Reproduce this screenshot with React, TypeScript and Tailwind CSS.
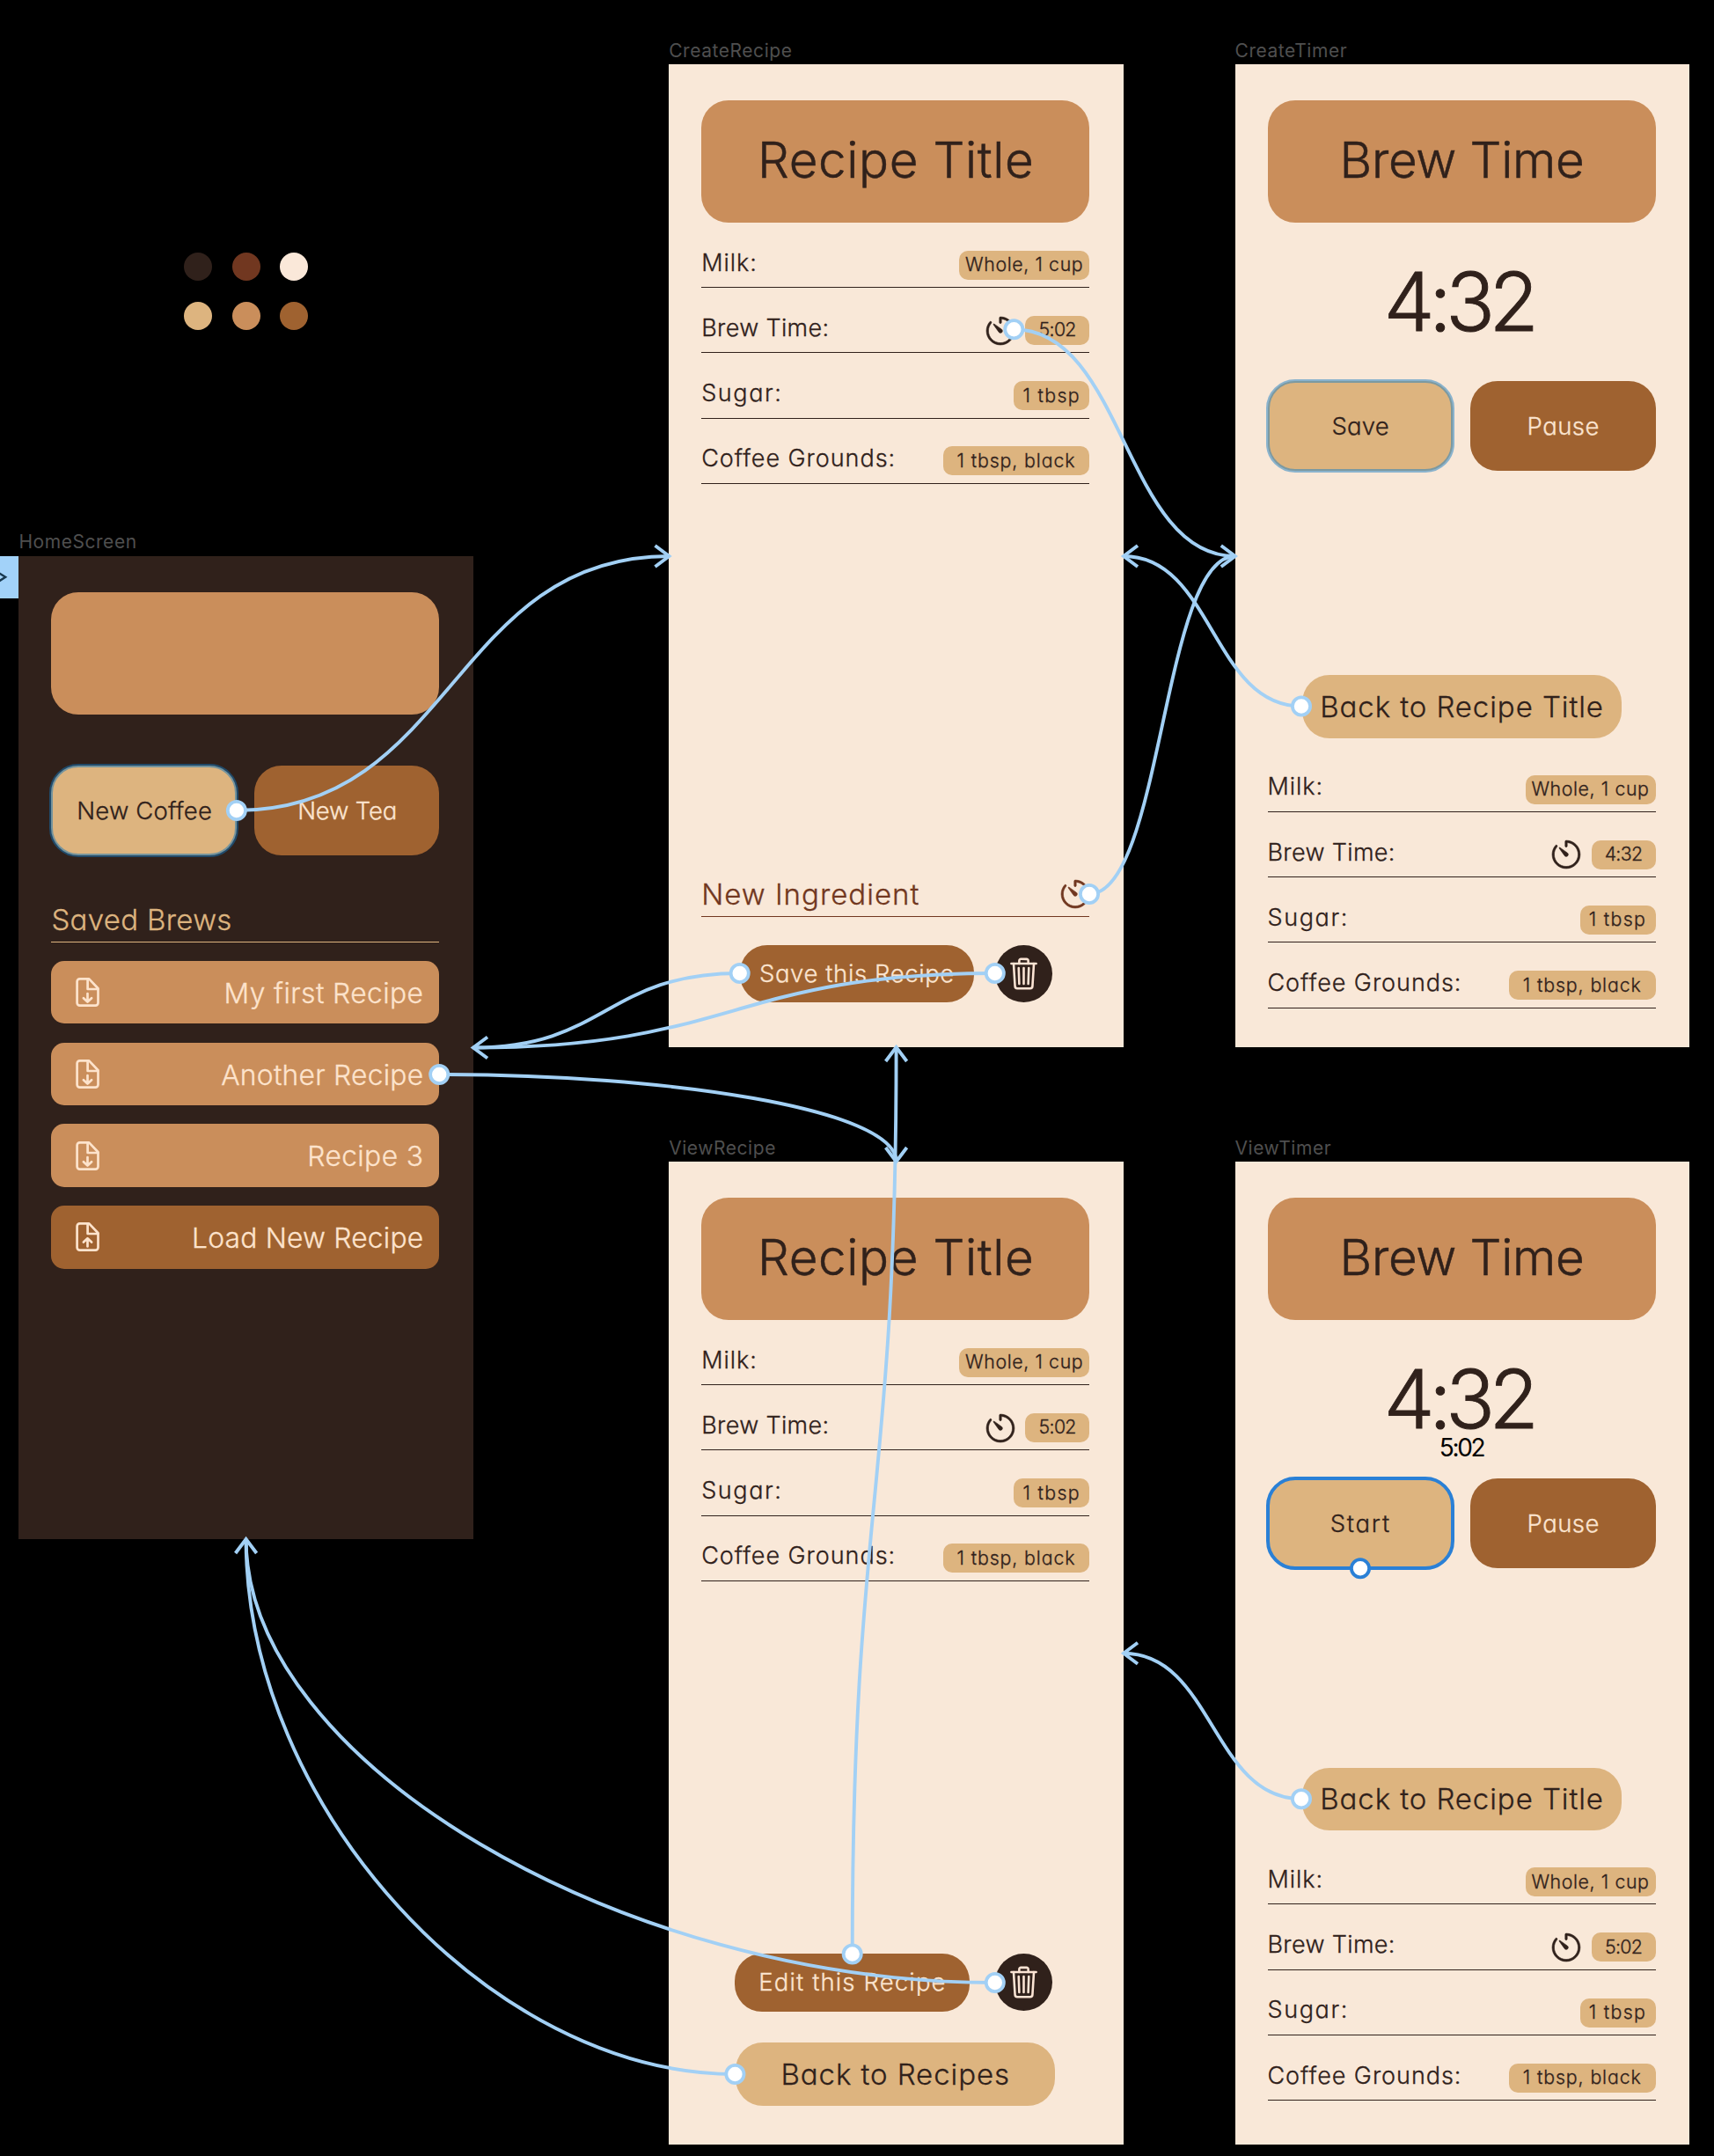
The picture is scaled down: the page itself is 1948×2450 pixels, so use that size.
import type { ReactNode } from "react";
import { RxTimer } from "react-icons/rx";
import { IoTrashOutline } from "react-icons/io5";

const swatches = ["bg-[#30211b]", "bg-[#713720]", "bg-[#fae8d9]", "bg-[#ddb47f]", "bg-[#ca8e5b]", "bg-[#9f6230]"];

type Ingredient = { label: string; tracking: string; value: string; chip: string; timer?: boolean };

const milk: Ingredient = { label: "Milk:", tracking: "tracking-[0.95px]", value: "Whole, 1 cup", chip: "w-[148px] tracking-[0.62px]" };
const sugar: Ingredient = { label: "Sugar:", tracking: "tracking-[1.6px]", value: "1 tbsp", chip: "w-[86px] tracking-[1.37px]" };
const grounds: Ingredient = { label: "Coffee Grounds:", tracking: "tracking-[0.95px]", value: "1 tbsp, black", chip: "w-[166.5px] tracking-[0.9px]" };

const ingredients = (time: string): Ingredient[] => [
  milk,
  { label: "Brew Time:", tracking: "tracking-[0.34px]", value: time, chip: "w-[73px] tracking-[-0.68px]", timer: true },
  sugar,
  grounds,
];

function Frame({ name, place, dark, children }: { name: string; place: string; dark?: boolean; children: ReactNode }) {
  return (
    <section className={`absolute w-[516.5px] ${place}`}>
      <div className="absolute -top-[26.5px] left-0 text-[21px] leading-none font-normal tracking-[0.55px] whitespace-nowrap text-[#4f4f4f] [-webkit-text-stroke:0px] [font-feature-settings:normal]">{name}</div>
      <div className={`flex h-[1117px] flex-col px-[37px] pt-[41px] ${dark ? "bg-[#30211b]" : "bg-[#f9e8d8]"}`}>{children}</div>
    </section>
  );
}

function TitleCard({ children, tracking = "" }: { children?: ReactNode; tracking?: string }) {
  return (
    <div className={`flex h-[139px] w-[441px] shrink-0 items-center justify-center rounded-[31px] bg-[#ca8e5b] pb-[2px] pl-[1px] text-[56.5px] leading-none text-[#30211b] [-webkit-text-stroke:0.5px] ${tracking}`}>
      {children}
    </div>
  );
}

function ActionPair({ first, firstClass, second, secondClass }: { first: string; firstClass: string; second: string; secondClass: string }) {
  const base = "flex h-[102px] w-[210.5px] items-center justify-center rounded-[31px] pt-[2px] pl-[1px] text-[27.5px] leading-none";
  return (
    <div className="flex w-[441px] shrink-0 justify-between">
      <div className={`${base} bg-[#ddb47f] text-[#30211b] outline-solid outline-offset-[-2px] ${firstClass}`}>{first}</div>
      <div className={`${base} bg-[#9f6230] text-[#fbe4cf] ${secondClass}`}>{second}</div>
    </div>
  );
}

function TimerIcon({ className = "" }: { className?: string }) {
  return <RxTimer className={`size-[36px] stroke-current [stroke-width:0.25] ${className}`} />;
}

function Ingredients({ time }: { time: string }) {
  return (
    <div className="w-[441px] shrink-0">
      {ingredients(time).map((item) => (
        <div key={item.label} className="flex h-[74.2px] items-end border-b border-[#30211b]">
          <span className={`pb-[14.5px] text-[27px] leading-none text-[#30211b] ${item.tracking}`}>{item.label}</span>
          <div className="ml-auto flex items-center gap-[10.5px] pb-[8.3px]">
            {item.timer && <TimerIcon className="-my-[2px] text-[#30211b]" />}
            <span className={`flex h-[33px] items-center justify-center rounded-[10px] bg-[#ddb47f] pb-[1px] text-[21.3px] leading-none text-[#30211b] ${item.chip}`}>
              {item.value}
            </span>
          </div>
        </div>
      ))}
    </div>
  );
}

function FileIcon({ up }: { up?: boolean }) {
  return (
    <svg viewBox="0 0 27 33" className="h-[33px] w-[27px]" fill="none" stroke="#fde3cc" strokeWidth="2.7" strokeLinecap="round" strokeLinejoin="round">
      <path d="M4.6 1.4H15.2L25.5 12.2V28.6a3 3 0 0 1-3 3H4.6a3 3 0 0 1-3-3V4.4a3 3 0 0 1 3-3Z" />
      <path d="M13.6 1.8V13H25.2" />
      {up ? <path d="M13.5 27.4V18.4M8.9 22.6L13.5 18.2L18.1 22.6" /> : <path d="M13.5 18V27.2M8.9 23.2L13.5 27.6L18.1 23.2" />}
    </svg>
  );
}

function SavedBrew({ name, tracking, upload }: { name: string; tracking: string; upload?: boolean }) {
  return (
    <div className={`flex h-[71.5px] items-center justify-between rounded-[15px] pr-[18px] pl-[27.5px] ${upload ? "bg-[#9f6230]" : "bg-[#ca8e5b]"}`}>
      <FileIcon up={upload} />
      <span className={`pt-[2px] text-[31.8px] leading-none text-[#fde3cc] [font-feature-settings:normal] ${tracking}`}>{name}</span>
    </div>
  );
}

function TrashButton() {
  return (
    <div className="flex size-[65px] items-center justify-center rounded-full bg-[#30211b]">
      <IoTrashOutline className="size-[41px] text-[#fbe4d4]" />
    </div>
  );
}

function Clock({ small }: { small?: string }) {
  return (
    <div className="flex h-[180px] w-[441px] shrink-0 flex-col items-center pt-[51.5px]">
      <div className="pr-[7px] text-[92px] leading-[76px] tracking-[-6.6px] text-[#30211b] [-webkit-text-stroke:0.9px]">4:32</div>
      {small && <div className="mt-[3.5px] text-[28px] leading-none font-normal tracking-[-2.3px] text-black [-webkit-text-stroke:0px]">{small}</div>}
    </div>
  );
}

function WideButton({ children, place }: { children: ReactNode; place: string }) {
  return (
    <div className={`flex h-[71.5px] w-[363px] shrink-0 items-center justify-center rounded-[31px] bg-[#ddb47f] pt-[1px] text-[33px] leading-none tracking-[0.92px] whitespace-nowrap text-[#30211b] ${place}`}>
      {children}
    </div>
  );
}

type Link = { d: string; dot: [number, number] };

const links: Link[] = [
  { d: "M268.7 921C514.5 921 514.5 632 760.5 632", dot: [268.9, 921] },
  { d: "M1152.3 374.3C1278 374.3 1278 632 1403.8 632", dot: [1152.3, 374.3] },
  { d: "M1238 1016C1321 1016 1321 632 1403.8 632", dot: [1238, 1016] },
  { d: "M1479 802.5C1378 802.5 1378 632 1277 632", dot: [1479, 802.5] },
  { d: "M840.7 1106C689 1106 689 1190.5 537.8 1190.5", dot: [840.7, 1106] },
  { d: "M1130.8 1106C834.2 1106 834.2 1190.5 537.8 1190.5", dot: [1130.8, 1106] },
  { d: "M499.2 1221C759 1221 1018.6 1260 1018.6 1320", dot: [499.2, 1221] },
  { d: "M968.7 2220.5C968.7 1705 1018.6 1705 1018.6 1190", dot: [968.7, 2220.5] },
  { d: "M1130.8 2253C705.2 2253 279.6 2001 279.6 1749", dot: [1130.8, 2253] },
  { d: "M835.4 2357C557.5 2357 279.6 2053 279.6 1749", dot: [835.4, 2357] },
  { d: "M1479 2044.2C1378 2044.2 1378 1878.8 1277 1878.8", dot: [1479, 2044.2] },
];

const arrowHeads = [
  "M744.5 620L760.5 632L744.5 644",
  "M1387.8 620L1403.8 632L1387.8 644",
  "M1293 620L1277 632L1293 644",
  "M554 1178.5L537.8 1190.5L554 1202.5",
  "M1006.6 1304L1018.6 1320L1030.6 1304",
  "M1006.6 1206L1018.6 1190L1030.6 1206",
  "M267.6 1765L279.6 1749L291.6 1765",
  "M1293 1866.8L1277 1878.8L1293 1890.8",
];

function Connectors() {
  return (
    <svg className="pointer-events-none absolute inset-0" width="1948" height="2450" viewBox="0 0 1948 2450" fill="none">
      <g stroke="#a2d0f5" strokeWidth="3.9">
        {links.map((link) => (
          <path key={link.d} d={link.d} />
        ))}
        {arrowHeads.map((d) => (
          <path key={d} d={d} />
        ))}
      </g>
      {links.map(({ dot }) => (
        <circle key={dot.join()} cx={dot[0]} cy={dot[1]} r="10.1" fill="#fff" stroke="#a2d0f5" strokeWidth="3.8" />
      ))}
      <circle cx="1546" cy="1782.2" r="10.1" fill="#fff" stroke="#2a80d6" strokeWidth="3.8" />
    </svg>
  );
}

export default function App() {
  return (
    <div className="relative h-[2450px] w-[1948px] overflow-hidden bg-black font-['Inter',sans-serif] font-light [-webkit-text-stroke:0.3px] [font-feature-settings:'cv11']">
      <div className="absolute top-[287px] left-[209px] grid grid-cols-3 gap-x-[22.5px] gap-y-[24px]">
        {swatches.map((color) => (
          <div key={color} className={`size-[32px] rounded-full ${color}`} />
        ))}
      </div>

      <div className="absolute top-[632px] left-0 h-[48px] w-[21px] bg-[#a2d2f9]">
        <svg className="h-full w-full" viewBox="0 0 21 48" fill="none" stroke="#17384f" strokeWidth="2.4">
          <path d="M-2 18.6L6.2 23.8L-2 29" />
        </svg>
      </div>

      <Frame name="HomeScreen" place="left-[21.4px] top-[631.6px]" dark>
        <TitleCard />
        <div className="mt-[58px]">
          <ActionPair
            first="New Coffee"
            firstClass="outline-[4px] outline-[#0f73b9]/50 tracking-[0.16px]"
            second="New Tea"
            secondClass="tracking-[-0.2px]"
          />
        </div>
        <div className="flex h-[99.2px] w-[441px] shrink-0 items-end border-b border-[#ddb47f] pb-[8px] text-[33px] leading-none tracking-[0.31px] text-[#ddb47f]">
          Saved Brews
        </div>
        <div className="mt-[21.2px] flex w-[441px] flex-col gap-[21.2px]">
          <SavedBrew name="My first Recipe" tracking="tracking-[0.39px]" />
          <SavedBrew name="Another Recipe" tracking="tracking-[0.23px]" />
          <SavedBrew name="Recipe 3" tracking="tracking-[0.37px]" />
          <SavedBrew name="Load New Recipe" tracking="tracking-[0.19px]" upload />
        </div>
      </Frame>

      <Frame name="CreateRecipe" place="left-[760.2px] top-[73px]">
        <TitleCard tracking="tracking-[0.6px]">Recipe Title</TitleCard>
        <Ingredients time="5:02" />
        <div className="mt-auto flex h-[74px] w-[441px] shrink-0 items-end justify-between border-b border-[#713720] text-[#713720]">
          <span className="pb-[8px] text-[33px] leading-none tracking-[1px]">New Ingredient</span>
          <TimerIcon className="mb-[7px] -mr-[2px]" />
        </div>
        <div className="mt-[32px] mb-[51px] ml-[44px] flex items-center gap-[24.5px]">
          <div className="flex h-[65.5px] w-[265.5px] items-center justify-center rounded-[31px] bg-[#9f6230] text-[27.5px] leading-none tracking-[0.59px] text-[#fbe4cf]">
            Save this Recipe
          </div>
          <TrashButton />
        </div>
      </Frame>

      <Frame name="CreateTimer" place="left-[1403.5px] top-[73px]">
        <TitleCard tracking="tracking-[-0.33px]">Brew Time</TitleCard>
        <Clock />
        <ActionPair
          first="Save"
          firstClass="outline-[4px] outline-[#1c7ec1]/50 tracking-[0.23px]"
          second="Pause"
          secondClass="tracking-[0.48px]"
        />
        <WideButton place="mt-[232px] ml-[39.5px]">Back to Recipe Title</WideButton>
        <div className="mt-[10.3px]">
          <Ingredients time="4:32" />
        </div>
      </Frame>

      <Frame name="ViewRecipe" place="left-[760.2px] top-[1320px]">
        <TitleCard tracking="tracking-[0.6px]">Recipe Title</TitleCard>
        <Ingredients time="5:02" />
        <div className="mt-auto ml-[38px] flex items-center gap-[29.5px]">
          <div className="flex h-[65.5px] w-[266.5px] items-center justify-center rounded-[31px] bg-[#9f6230] pl-[1px] text-[27.5px] leading-none tracking-[1.13px] text-[#fbe4cf]">
            Edit this Recipe
          </div>
          <TrashButton />
        </div>
        <WideButton place="mt-[35.5px] mb-[44.5px] ml-[39px]">Back to Recipes</WideButton>
      </Frame>

      <Frame name="ViewTimer" place="left-[1403.5px] top-[1320px]">
        <TitleCard tracking="tracking-[-0.33px]">Brew Time</TitleCard>
        <Clock small="5:02" />
        <ActionPair
          first="Start"
          firstClass="outline-[4px] outline-[#2a80d6] tracking-[1.75px]"
          second="Pause"
          secondClass="tracking-[0.48px]"
        />
        <WideButton place="mt-[226.5px] ml-[39.5px]">Back to Recipe Title</WideButton>
        <div className="mt-[10.3px]">
          <Ingredients time="5:02" />
        </div>
      </Frame>

      <Connectors />
    </div>
  );
}
